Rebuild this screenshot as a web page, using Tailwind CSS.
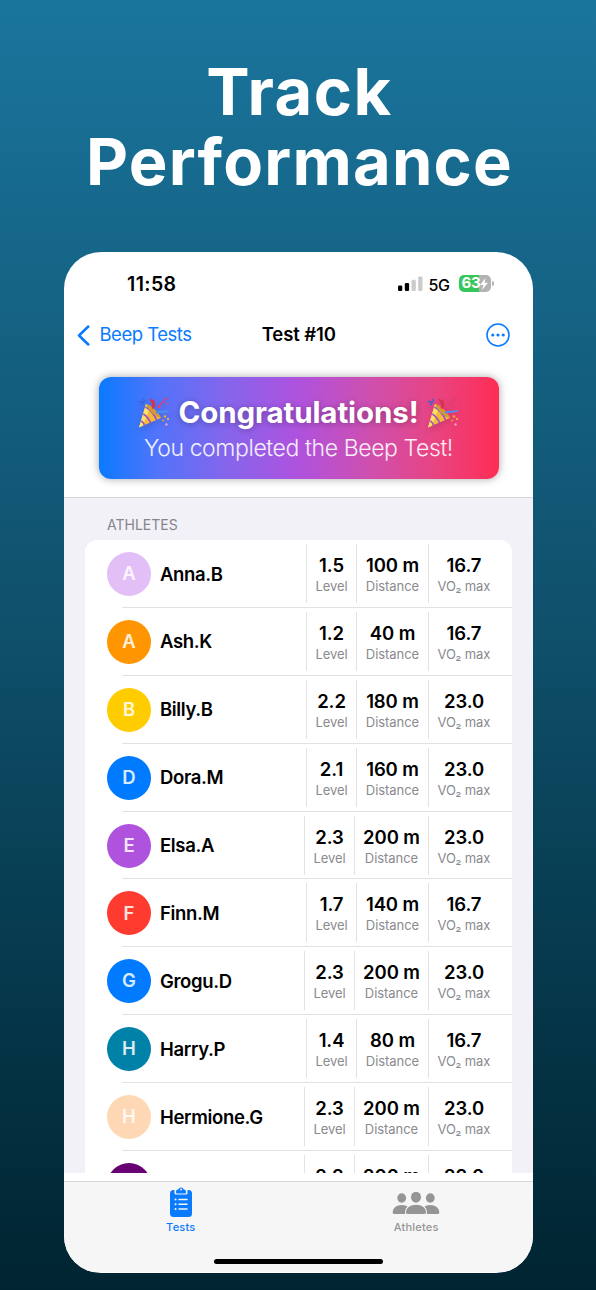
<!DOCTYPE html>
<html lang="en">
<head>
    <meta charset="UTF-8">
    <meta name="viewport" content="width=device-width, initial-scale=1.0">
    <title>Track Performance</title>
    <script src="https://cdn.jsdelivr.net/npm/@tailwindcss/browser@4"></script>
</head>
<body class="w-[596px] h-[1290px] overflow-hidden bg-linear-to-b from-[#1a759d] via-[#0f4f6a] to-[#012431] font-['Inter',sans-serif] text-black">
    <svg class="hidden">
        <symbol id="popper" viewBox="0 0 32 32">
            <path d="M1 30.500 8 7c5 1 12 8 15 14z" fill="#f4b83a"/>
            <path d="M1 30.500 8 7l4 3.500L5 28.500z" fill="#ffe06a"/>
            <path d="M7.500 10c4 2 9.500 8 11 13M5.300 17c3 1.500 6.500 6 7.500 9.500M3.200 24c1.500.8 3 2.800 3.500 4.600" stroke="#9a55c0" stroke-width="1.800" fill="none"/>
            <path d="M8 7c5 1 12 8 15 14-6-1-13-8-15-14z" fill="#d29a34"/>
            <path d="M14.500 11.500c1-3 .5-6-2.500-9.500M14.500 11.500c3-3 2-6 .5-8.500" stroke="#d8324f" stroke-width="1.800" fill="none"/>
            <path d="M18 16c4-2.500 8 0 13-2.500" stroke="#4b8df0" stroke-width="1.900" fill="none"/>
            <path d="M1 4.500l4.500.5-2 3M5 2l2 2" stroke="#3d62d8" stroke-width="1.400" fill="none"/>
            <path d="M23 8c-1-3 3-2 3-4s2-2 4-3" stroke="#d63f78" stroke-width="1.400" fill="none"/>
            <circle cx="21" cy="9.500" r="1.500" fill="#ee3f62"/>
            <circle cx="27" cy="19.500" r="1.300" fill="#f0a52c"/>
            <circle cx="30" cy="22" r="1.100" fill="#f6c23c"/>
            <circle cx="28.500" cy="27.500" r="1.200" fill="#f0a0d0"/>
            <circle cx="25" cy="23.500" r="1.100" fill="#e59a2c"/>
            <circle cx="29.500" cy="7" r="1" fill="#e04a7c"/>
        </symbol>
    </svg>

    <h1 class="h-[252px] pt-[57px] pl-[3px] text-center text-[65px] leading-[70px] font-bold text-white">
        <span class="tracking-[1.500px]">Track</span><br><span class="tracking-[1.200px]">Performance</span>
    </h1>

    <main class="ml-[63.500px] w-[469px] h-[1021px] rounded-[37px] overflow-hidden bg-white flex flex-col">
        <!-- status bar -->
        <div class="h-[54px] pt-[11px] pl-[63.500px] pr-[39px] flex items-center justify-between shrink-0">
            <span class="text-[19.500px] font-semibold tracking-[0.4px]">11:58</span>
            <div class="flex items-center">
                <svg class="w-[26px] h-4 -mt-[2px]" viewBox="0 0 26 16">
                    <rect x="0" y="9.500" width="4.300" height="5.500" rx="1.200"/>
                    <rect x="6.800" y="7" width="4.300" height="8" rx="1.200"/>
                    <rect x="13.500" y="3.700" width="4.300" height="11.300" rx="1.200" fill="#cbcbcb"/>
                    <rect x="20.200" y="0.500" width="4.300" height="14.500" rx="1.200" fill="#cbcbcb"/>
                </svg>
                <span class="ml-[5px] w-[23px] text-[16px] font-medium tracking-[-0.4px]">5G</span>
                <div class="ml-[7px] -mt-[2px] w-8 h-[17px] rounded-[5px] bg-linear-to-r from-[#35c759] from-64% to-[#b3b3b3] to-64% flex items-center pl-[3px] text-white">
                    <span class="text-[15px] font-bold tracking-[-0.3px]">63</span>
                    <svg class="w-2 h-3" viewBox="0 0 8 12" fill="currentColor"><path d="M5.500 0 0 7h3.400L2 12l6-7.200H4.600z"/></svg>
                </div>
                <div class="ml-px -mt-[2px] w-[2px] h-[5px] rounded-r-full bg-[#b3b3b3]"></div>
            </div>
        </div>

        <!-- navigation -->
        <nav class="h-[58px] pl-[13.500px] pr-[23px] grid grid-cols-[1fr_auto_1fr] items-center shrink-0 text-[18.500px]">
            <a class="flex items-center text-[#0a7aff] tracking-[-0.5px]">
                <svg class="w-[13px] h-[21px] mr-[9.500px]" viewBox="0 0 13 21" fill="none" stroke="currentColor" stroke-width="2.500" stroke-linecap="round" stroke-linejoin="round"><path d="M11.300 1.500 2 10.500l9.300 9"/></svg>
                <span>Beep Tests</span>
            </a>
            <span class="pl-[11px] font-semibold tracking-[-0.1px]">Test #10</span>
            <svg class="w-6 h-6 justify-self-end" viewBox="0 0 24 24" fill="#0a7aff">
                <circle cx="12" cy="12" r="11" fill="none" stroke="#0a7aff" stroke-width="1.600"/>
                <circle cx="6.800" cy="12" r="1.600"/><circle cx="12" cy="12" r="1.600"/><circle cx="17.200" cy="12" r="1.600"/>
            </svg>
        </nav>

        <!-- banner -->
        <div class="h-[133px] pt-[12.500px] pl-[35px] shrink-0">
            <div class="w-[400px] h-[102.500px] rounded-xl bg-[linear-gradient(to_right,#0a7aff,#4f74fb_14%,#8665ec_32%,#af52de_50%,#cf4fae_68%,#e84482_84%,#ff2d55)] shadow-[0_0_8px_rgba(0,0,0,0.35)] flex flex-col items-center pt-[18px] text-white">
                <div class="flex items-center h-9 text-[29.500px] font-bold tracking-[-0.1px] text-shadow-[0_1px_6px_rgba(0,0,0,0.3)]">
                    <svg class="w-8 h-8 mr-2 drop-shadow-md"><use href="#popper"/></svg>
                    Congratulations!
                    <svg class="w-8 h-8 ml-2 drop-shadow-md"><use href="#popper"/></svg>
                </div>
                <p class="text-[23px] leading-[34px] font-light tracking-[-0.4px] text-white/90">You completed the Beep Test!</p>
            </div>
        </div>

        <!-- athletes -->
        <section class="h-[676px] pl-[21.500px] pr-[20.500px] bg-[#f2f1f7] border-t border-[#d5d5da] overflow-hidden shrink-0">
            <h2 class="h-[42px] pt-[16px] pl-[22px] text-[14px] leading-[22px] text-[#85858a]">ATHLETES</h2>
            <ul id="athletes" class="bg-white rounded-t-xl"></ul>
        </section>

        <!-- tab bar -->
        <footer class="mt-2 h-[91px] border-t border-[#d8d8d8] bg-[#f6f6f6] flex flex-col shrink-0">
            <div class="grid grid-cols-2 h-[77px] text-[11px] font-medium tracking-[0.2px]">
                <div class="flex flex-col items-center pt-[4px] text-[#0a7aff]">
                    <svg class="w-[22px] h-[31px]" viewBox="0 0 22 31">
                        <rect y="4" width="22" height="27" rx="3.500" fill="currentColor"/>
                        <path d="M4.500 3v4q0 1.500 1.500 1.500h10q1.500 0 1.500-1.500V3z" fill="#f6f6f6"/>
                        <path d="M6 5.500q0-2 2-2h.3a2.800 2.800 0 0 1 5.400 0h.3q2 0 2 2v1q0 .9-.9.900H6.900q-.9 0-.9-.9z" fill="currentColor"/>
                        <circle cx="11" cy="3.400" r="1" fill="#f6f6f6"/>
                        <g stroke="#f6f6f6" stroke-width="1.500" stroke-linecap="round"><path d="M5.500 13.500h.1M5.500 18.200h.1M5.500 23h.1" stroke-width="2"/><path d="M9 13.500h8M9 18.200h8M9 23h8"/></g>
                    </svg>
                    <span class="mt-[2px]">Tests</span>
                </div>
                <div class="flex flex-col items-center pl-[2px] pt-[4px] text-[#959595]">
                    <svg class="w-12 h-[31px]" viewBox="0 0 48 31" fill="currentColor">
                        <ellipse cx="9.700" cy="12" rx="4.400" ry="4.700"/><ellipse cx="38.300" cy="12" rx="4.400" ry="4.700"/>
                        <path d="M.7 26.500C.7 22 4.500 19 9.700 19s9 3 9 7.500q0 1.500-1.500 1.500H2.200Q.7 28 .7 26.500zM29.300 26.500c0-4.500 3.800-7.500 9-7.500s9 3 9 7.500q0 1.500-1.500 1.500h-15q-1.500 0-1.500-1.500z"/>
                        <path d="M14 26.300C14 21.800 18.500 18.800 24 18.800s10 3 10 7.500q0 1.700-1.700 1.700H15.700Q14 28 14 26.300z" stroke="#f6f6f6" stroke-width="2" paint-order="stroke"/>
                        <ellipse cx="24" cy="11.200" rx="5" ry="5.500"/>
                    </svg>
                    <span class="mt-[2px]">Athletes</span>
                </div>
            </div>
            <div class="w-[169px] h-[5px] mx-auto rounded-full bg-black"></div>
        </footer>
    </main>

    <script>
        const athletes = [
            ['Anna.B', '#e3bff8', '1.5', 100, '16.7'],
            ['Ash.K', '#ff9500', '1.2', 40, '16.7'],
            ['Billy.B', '#ffcc00', '2.2', 180, '23.0'],
            ['Dora.M', '#007aff', '2.1', 160, '23.0'],
            ['Elsa.A', '#af52de', '2.3', 200, '23.0'],
            ['Finn.M', '#ff3b30', '1.7', 140, '16.7'],
            ['Grogu.D', '#007aff', '2.3', 200, '23.0'],
            ['Harry.P', '#0082a8', '1.4', 80, '16.7'],
            ['Hermione.G', '#fed8b5', '2.3', 200, '23.0'],
            ['Jack.S', '#660073', '2.3', 200, '23.0'],
        ];

        function stat(value, label, size) {
            return `<div class="${size} h-[59px] pt-[9px] border-l border-[#e2e2e4] text-center shrink-0">
                <div class="text-[18.500px] leading-[24px] font-semibold tracking-[-0.1px]">${value}</div>
                <div class="text-[13px] leading-[18px] tracking-[-0.05px] text-[#8a8a8e]">${label}</div>
            </div>`;
        }

        document.getElementById('athletes').innerHTML = athletes.map(([name, color, level, distance, vo2]) => `
            <li class="h-[67.900px]">
                <div class="h-[66.900px] pl-[22px] flex items-center">
                    <div class="mt-px w-11 h-11 rounded-full flex items-center justify-center text-[18.500px] font-semibold text-white/85" style="background:${color}">${name[0]}</div>
                    <div class="ml-[9px] pt-[2px] flex-1 text-[18.500px] font-semibold tracking-[-0.35px]">${name}</div>
                    ${stat(level, 'Level', 'w-[50px]')}
                    ${stat(distance + ' m', 'Distance', distance === 200 ? 'w-[74px]' : 'w-[72px]')}
                    ${stat(vo2, 'VO₂ max', 'w-[84px] pr-[13px]')}
                </div>
                <div class="ml-[37px] h-px bg-[#e2e2e4]"></div>
            </li>`).join('');
    </script>
</body>
</html>
